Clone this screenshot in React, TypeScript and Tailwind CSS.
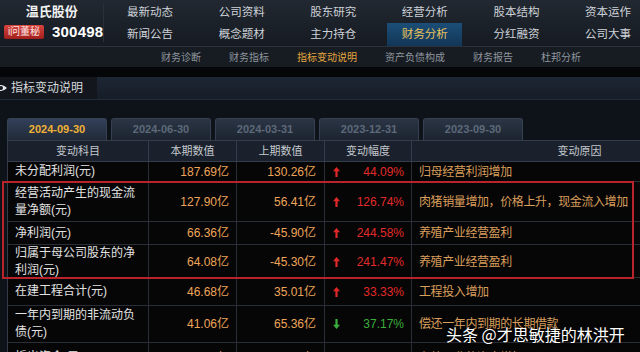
import React from 'react';

type Row = {
  name: string;
  cur: string;
  prev: string;
  pct: string;
  up: boolean;
  reason: string;
  h: string;
};

const topNav = ['最新动态', '公司资料', '股东研究', '经营分析', '股本结构', '资本运作'];
const bottomNav = ['新闻公告', '概念题材', '主力持仓', '财务分析', '分红融资', '公司大事'];
const subNav = ['财务诊断', '财务指标', '指标变动说明', '资产负债构成', '财务报告', '杜邦分析'];
const periods = ['2024-09-30', '2024-06-30', '2024-03-31', '2023-12-31', '2023-09-30'];

const rows: Row[] = [
  { name: '未分配利润(元)', cur: '187.69亿', prev: '130.26亿', pct: '44.09%', up: true, reason: '归母经营利润增加', h: 'h-[20px]' },
  { name: '经营活动产生的现金流量净额(元)', cur: '127.90亿', prev: '56.41亿', pct: '126.74%', up: true, reason: '肉猪销量增加，价格上升，现金流入增加', h: 'h-[40px]' },
  { name: '净利润(元)', cur: '66.36亿', prev: '-45.90亿', pct: '244.58%', up: true, reason: '养殖产业经营盈利', h: 'h-[23px]' },
  { name: '归属于母公司股东的净利润(元)', cur: '64.08亿', prev: '-45.30亿', pct: '241.47%', up: true, reason: '养殖产业经营盈利', h: 'h-[33px]' },
  { name: '在建工程合计(元)', cur: '46.68亿', prev: '35.01亿', pct: '33.33%', up: true, reason: '工程投入增加', h: 'h-[28px]' },
  { name: '一年内到期的非流动负债(元)', cur: '41.06亿', prev: '65.36亿', pct: '37.17%', up: false, reason: '偿还一年内到期的长期借款', h: 'h-[37px]' },
  { name: '拆出资金(元)', cur: '37.61亿', prev: '28.92亿', pct: '30.05%', up: true, reason: '存放同业的资金增加', h: 'h-[30px]' },
];

const Arrow = ({ up }: { up: boolean }) => (
  <svg width="7" height="10" viewBox="0 0 7 10" className={up ? 'text-[#e02828]' : 'text-[#3cae3c] rotate-180'}>
    <path d="M3.5 0 L7 4.2 L4.6 4.2 L4.6 10 L2.4 10 L2.4 4.2 L0 4.2 Z" fill="currentColor" />
  </svg>
);

const EyeIcon = () => (
  <svg width="12" height="10" viewBox="0 0 12 10" className="-ml-[5px]">
    <path d="M0 5 Q6 -1 12 5 Q6 11 0 5 Z" fill="#e8ecef" />
    <circle cx="6" cy="5" r="2" fill="#151a21" />
  </svg>
);

export default function App() {
  return (
    <div className="relative w-[640px] h-[352px] overflow-hidden bg-[#0e1319] font-['Liberation_Sans','Noto_Sans_CJK_SC',sans-serif]">
      {/* stock header */}
      <div className="flex h-[46px] bg-gradient-to-b from-[#222831] to-[#161b22]">
        <div className="w-[110px] flex flex-col border-r border-[#2a313b] my-[4px]">
          <div className="h-[18px] flex items-center justify-center text-[13px] font-bold text-[#f2f2f2] -mt-[1px]">温氏股份</div>
          <div className="flex items-center h-[20px] mt-[1px]">
            <span className="ml-[4px] w-[40px] h-[14px] rounded-[2px] bg-gradient-to-b from-[#d8443e] to-[#a21f1c] text-[10px] leading-[14px] text-[#fbe4e2] text-center">i问董秘</span>
            <span className="ml-[8px] text-[15px] font-bold text-white tracking-[0.2px]">300498</span>
          </div>
        </div>
        <div className="flex flex-col">
          <div className="flex h-[23px] items-center">
            {topNav.map((t) => (
              <div key={t} className="w-[91.6px] text-center text-[11.5px] text-[#cdd2d8] pt-[3px]">{t}</div>
            ))}
          </div>
          <div className="flex h-[23px]">
            {bottomNav.map((t) =>
              t === '财务分析' ? (
                <div key={t} className="w-[91.6px] flex justify-center">
                  <div className="w-[75px] h-full flex items-center justify-center bg-gradient-to-b from-[#1c4e78] to-[#123656] text-[11.5px] text-[#e9c25a]">{t}</div>
                </div>
              ) : (
                <div key={t} className="w-[91.6px] flex items-center justify-center text-[11.5px] text-[#cdd2d8]">{t}</div>
              )
            )}
          </div>
        </div>
      </div>

      {/* sub navigation */}
      <div className="h-[21px] flex items-center gap-[28px] pl-[161px] bg-[#171c23] border-t border-[#2b323c]">
        {subNav.map((t) => (
          <span key={t} className={`text-[10px] ${t === '指标变动说明' ? 'text-[#e4a53c]' : 'text-[#8f969e]'}`}>{t}</span>
        ))}
      </div>

      <div className="h-[10px] bg-[#050607]" />

      {/* section title */}
      <div className="h-[23px] flex bg-gradient-to-b from-[#1d2634] to-[#161d28] border-b border-[#222b38]">
        <div className="w-[97px] flex items-center bg-[#13171d]">
          <EyeIcon />
          <span className="ml-[4px] text-[12px] text-[#d6d9dc]">指标变动说明</span>
        </div>
      </div>

      <div className="h-[18px]" />

      {/* period tabs */}
      <div className="flex gap-[4px] pl-[7px] h-[22px]">
        {periods.map((p, i) => (
          <div
            key={p}
            className={`w-[100px] rounded-t-[3px] border-t border-x border-[#354051] flex items-center justify-center text-[11px] font-bold ${
              i === 0 ? 'bg-gradient-to-b from-[#33405a] to-[#202a38] text-[#f0b236]' : 'bg-gradient-to-b from-[#2b3545] to-[#1c2430] text-[#5d6979]'
            }`}
          >
            {p}
          </div>
        ))}
      </div>

      {/* indicator table */}
      <div className="ml-[7px] w-[740px] border-l border-[#343c48]">
        <div className="grid grid-cols-[141px_88px_88px_87px_336px] h-[22px] bg-[#1a212c] border-y border-[#343d4a] text-[11px] text-[#c3c7cc]">
          {['变动科目', '本期数值', '上期数值', '变动幅度', '变动原因'].map((t) => (
            <div key={t} className="flex items-center justify-center border-r border-[#343d4a]">{t}</div>
          ))}
        </div>
        {rows.map((r) => (
          <div key={r.name} className={`grid grid-cols-[141px_88px_88px_87px_336px] ${r.h} bg-[#060606] border-b border-[#2a2f37] text-[12px]`}>
            <div className="flex items-center pl-[7px] pr-[12px] leading-[17px] text-[#e2e2e2] border-r border-[#2a2f37]">{r.name}</div>
            <div className="flex items-center justify-end pr-[7px] text-[#eea55a] border-r border-[#2a2f37]">{r.cur}</div>
            <div className="flex items-center justify-end pr-[8px] text-[#eea55a] border-r border-[#2a2f37]">{r.prev}</div>
            <div className="flex items-center pl-[8px] pr-[7px] border-r border-[#2a2f37]">
              <Arrow up={r.up} />
              <span className={`ml-auto ${r.up ? 'text-[#e22a2a]' : 'text-[#3cae3c]'}`}>{r.pct}</span>
            </div>
            <div className="flex items-center pl-[7px] text-[#d99e5c] whitespace-nowrap tracking-[-0.4px]">{r.reason}</div>
          </div>
        ))}
      </div>

      {/* highlight frame */}
      <div className="absolute left-[2px] top-[181px] w-[632px] h-[98px] border-2 border-[#b8232c] pointer-events-none" />

      {/* watermark */}
      <div className="absolute left-[446px] top-[322px] text-[16px] text-white font-['Noto_Sans_CJK_SC',sans-serif] [text-shadow:0_0_3px_rgba(0,0,0,0.9)]">
        头条 @才思敏捷的林洪开
      </div>
    </div>
  );
}
